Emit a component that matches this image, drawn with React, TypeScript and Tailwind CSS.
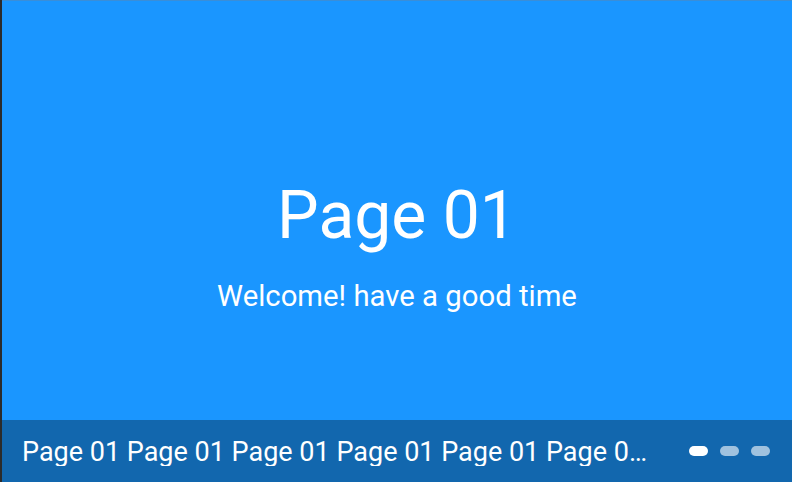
import React, { useState } from 'react';

const slides = [
  { title: 'Page 01', subtitle: 'Welcome! have a good time' },
  { title: 'Page 02', subtitle: 'Welcome! have a good time' },
  { title: 'Page 03', subtitle: 'Welcome! have a good time' },
];

export default function App() {
  const [active, setActive] = useState<number>(0);
  const slide = slides[active];

  return (
    <div
      className="flex h-[482px] w-[792px] flex-col border-l-2 border-[#2b2b2b] bg-[#1a96ff] text-white"
      style={{ fontFamily: 'Roboto, "Noto Sans", sans-serif' }}
    >
      <div className="flex flex-1 flex-col items-center justify-center border-t border-[#3a8ed8] pt-[74px]">
        <h1 className="text-[66px] leading-none font-normal">{slide.title}</h1>
        <p className="mt-[33px] text-[29.3px] leading-none">{slide.subtitle}</p>
      </div>
      <div className="flex h-[62px] items-center bg-[#1267ae] pl-5 pr-[22px]">
        <p className="min-w-0 flex-1 truncate pt-[3px] pr-8 text-[27px] leading-none">
          {Array.from({ length: 8 }, () => slide.title).join(' ')}
        </p>
        <div className="flex gap-3">
          {slides.map((s, i) => (
            <button
              key={s.title}
              type="button"
              onClick={() => setActive(i)}
              className={
                i === active
                  ? 'h-[10px] w-[19px] rounded-full bg-white'
                  : 'h-[10px] w-[19px] rounded-full bg-white/60'
              }
            />
          ))}
        </div>
      </div>
    </div>
  );
}
